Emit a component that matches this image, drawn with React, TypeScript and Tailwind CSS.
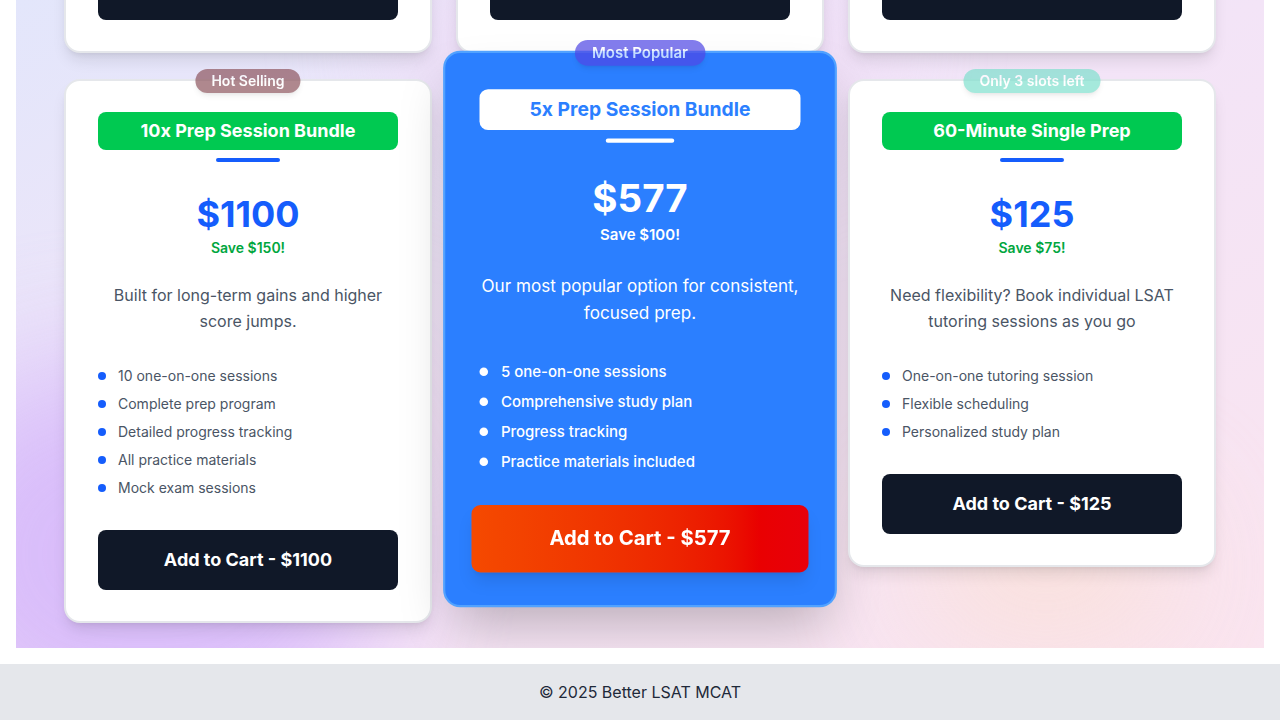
import type { ReactNode } from "react";

type Plan = {
  badge: string;
  badgeClass: string;
  title: string;
  price: string;
  save: string;
  desc: string;
  features: string[];
};

const plans: Plan[] = [
  {
    badge: "Hot Selling",
    badgeClass: "bg-[#8e565f]",
    title: "10x Prep Session Bundle",
    price: "$1100",
    save: "Save $150!",
    desc: "Built for long-term gains and higher score jumps.",
    features: [
      "10 one-on-one sessions",
      "Complete prep program",
      "Detailed progress tracking",
      "All practice materials",
      "Mock exam sessions",
    ],
  },
  {
    badge: "Most Popular",
    badgeClass: "bg-[#4f46e5]",
    title: "5x Prep Session Bundle",
    price: "$577",
    save: "Save $100!",
    desc: "Our most popular option for consistent, focused prep.",
    features: [
      "5 one-on-one sessions",
      "Comprehensive study plan",
      "Progress tracking",
      "Practice materials included",
    ],
  },
  {
    badge: "Only 3 slots left",
    badgeClass: "bg-[#80e0ce]",
    title: "60-Minute Single Prep",
    price: "$125",
    save: "Save $75!",
    desc: "Need flexibility? Book individual LSAT tutoring sessions as you go",
    features: ["One-on-one tutoring session", "Flexible scheduling", "Personalized study plan"],
  },
];

function Badge({ className, children }: { className: string; children: ReactNode }) {
  return (
    <span
      className={`absolute -top-3 left-1/2 -translate-x-1/2 whitespace-nowrap rounded-full px-4 py-0.5 text-sm font-semibold text-white opacity-70 shadow-md ${className}`}
    >
      {children}
    </span>
  );
}

function PlanCard({ plan }: { plan: Plan }) {
  return (
    <div className="relative rounded-2xl border-2 border-gray-200 bg-white px-8 pb-[31px] pt-[31px] shadow-lg">
      <Badge className={plan.badgeClass}>{plan.badge}</Badge>
      <h3 className="rounded-lg bg-green-500 py-[5px] text-center text-lg font-bold text-white">{plan.title}</h3>
      <div className="mx-auto mt-2 h-1 w-16 rounded-full bg-blue-600" />
      <div className="mt-8 text-center text-4xl leading-10 font-bold text-blue-600">{plan.price}</div>
      <p className="mt-1 text-center text-sm font-semibold text-green-600">{plan.save}</p>
      <p className="mt-6 text-center text-base leading-[26px] text-gray-600">{plan.desc}</p>
      <ul className="mt-8 space-y-2">
        {plan.features.map((f) => (
          <li key={f} className="flex items-center gap-3 text-sm text-gray-600">
            <span className="h-2 w-2 shrink-0 rounded-full bg-blue-600" />
            {f}
          </li>
        ))}
      </ul>
      <button className="mt-8 block h-[60px] w-full rounded-lg bg-gray-900 text-lg font-bold text-white">
        Add to Cart - {plan.price}
      </button>
    </div>
  );
}

function PopularCard({ plan }: { plan: Plan }) {
  return (
    <div className="relative -translate-y-[10px] scale-[1.07] rounded-2xl border-2 border-blue-400 bg-blue-500 px-8 pb-8 pt-[34px] shadow-2xl">
      <Badge className={`${plan.badgeClass} text-blue-100`}>{plan.badge}</Badge>
      <h3 className="rounded-lg bg-white py-[5px] text-center text-lg font-bold text-blue-500">{plan.title}</h3>
      <div className="mx-auto mt-2 h-1 w-16 rounded-full bg-white" />
      <div className="mt-8 text-center text-4xl leading-10 font-bold text-white">{plan.price}</div>
      <p className="mt-1 text-center text-sm font-semibold text-white">{plan.save}</p>
      <p className="mt-6 text-center text-base leading-[26px] text-white">{plan.desc}</p>
      <ul className="mt-8 space-y-2">
        {plan.features.map((f) => (
          <li key={f} className="flex items-center gap-3 text-sm font-medium text-white">
            <span className="h-2 w-2 shrink-0 rounded-full bg-white" />
            {f}
          </li>
        ))}
      </ul>
      <button className="mt-8 block h-[60px] w-full scale-105 rounded-lg bg-linear-to-r from-orange-600 to-red-600 text-lg font-bold text-white shadow-lg">
        Add to Cart - {plan.price}
      </button>
    </div>
  );
}

function TopCard({ label }: { label: string }) {
  return (
    <div className="rounded-2xl border-2 border-gray-200 bg-white px-8 pb-[31px] pt-[31px] shadow-lg">
      <button aria-label={label} className="block h-[60px] w-full rounded-lg bg-gray-900" />
    </div>
  );
}

export default function App() {
  return (
    <div className="min-h-screen bg-white font-['Inter',sans-serif]">
      <section className="relative mx-4 overflow-hidden bg-linear-to-br from-[#e3e6fb] via-[#f3e4f7] to-[#fae4ef] pb-[25px]">
        {/* soft color blobs */}
        <div className="absolute -bottom-24 -left-28 h-[380px] w-[480px] rounded-full bg-[#d3b3fb] opacity-80 blur-3xl" />
        <div className="absolute -top-20 left-[380px] h-[240px] w-[480px] rounded-full bg-[#efd6f3] opacity-60 blur-3xl" />
        <div className="absolute bottom-[10px] left-[900px] h-[140px] w-[260px] rounded-full bg-[#fbe0d4] opacity-80 blur-3xl" />

        <div className="relative mx-auto -mt-[73px] grid max-w-6xl grid-cols-3 items-start gap-x-6 gap-y-[26px]">
          <TopCard label="Add to Cart" />
          <TopCard label="Add to Cart" />
          <TopCard label="Add to Cart" />
          <PlanCard plan={plans[0]} />
          <PopularCard plan={plans[1]} />
          <PlanCard plan={plans[2]} />
        </div>
      </section>

      <footer className="mt-4 flex h-14 items-center justify-center bg-gray-200 text-base text-gray-800">
        © 2025 Better LSAT MCAT
      </footer>
    </div>
  );
}
